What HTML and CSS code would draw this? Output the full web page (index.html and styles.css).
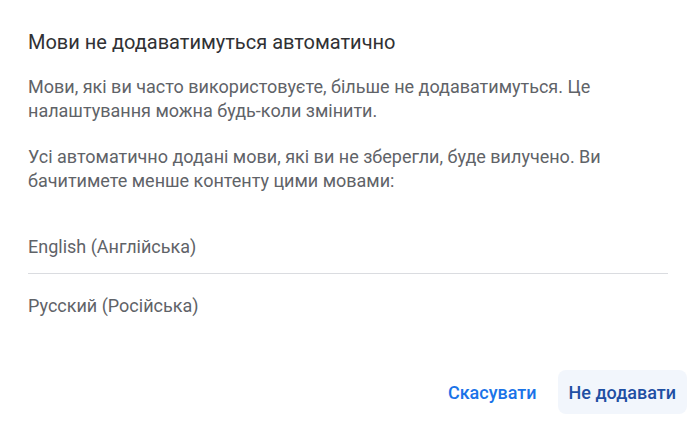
FILE: index.html
```html
<!DOCTYPE html>
<html lang="uk">
<head>
    <meta charset="UTF-8">
    <meta name="viewport" content="width=device-width, initial-scale=1.0">
    <title>Мови не додаватимуться автоматично</title>
    <link rel="stylesheet" href="styles.css">
</head>
<body>
    <div class="dialog">
        <h1 class="title">Мови не додаватимуться автоматично</h1>
        <div class="body">
            <p>Мови, які ви часто використовуєте, більше не додаватимуться. Це налаштування можна будь-коли змінити.</p>
            <p>Усі автоматично додані мови, які ви не зберегли, буде вилучено. Ви бачитимете менше контенту цими мовами:</p>
        </div>
        <div class="lang-list">
            <div class="lang-item">English (Англійська)</div>
            <div class="lang-item">Русский (Російська)</div>
        </div>
        <div class="buttons">
            <button class="btn btn-cancel">Скасувати</button>
            <button class="btn btn-confirm">Не додавати</button>
        </div>
    </div>
</body>
</html>
```

FILE: styles.css
```css
body {
    margin: 0;
    padding: 0;
    background: #ffffff;
    font-family: Roboto, "Liberation Sans", sans-serif;
}
.dialog {
    width: 696px;
    height: 422px;
    box-sizing: border-box;
    padding: 28px 28px 0 28px;
    display: flex;
    flex-direction: column;
}
.title {
    margin: 0;
    font-size: 20px;
    font-weight: 400;
    line-height: 28px;
    color: #303134;
}
.body {
    margin-top: 19px;
}
.body p {
    max-width: 630px;
    margin: 0 0 22px 0;
    font-size: 18px;
    line-height: 24px;
    color: #5f6368;
}
.lang-list {
    margin-top: 0;
}
.lang-item {
    padding: 20px 0 14px 0;
    font-size: 18px;
    line-height: 24px;
    color: #5f6368;
}
.lang-item:first-child {
    border-bottom: 1px solid #dadce0;
}
.buttons {
    margin-top: auto;
    margin-bottom: 8px;
    margin-right: -19px;
    display: flex;
    justify-content: flex-end;
    gap: 10px;
}
.btn {
    height: 44px;
    padding: 0 11px;
    border: none;
    border-radius: 8px;
    font-family: Roboto, "Liberation Sans", sans-serif;
    font-size: 18px;
    font-weight: 500;
    background: transparent;
    cursor: pointer;
}
.btn-cancel {
    color: #1a73e8;
}
.btn-confirm {
    background: #f2f6fc;
    color: #1f4fa3;
}
```
